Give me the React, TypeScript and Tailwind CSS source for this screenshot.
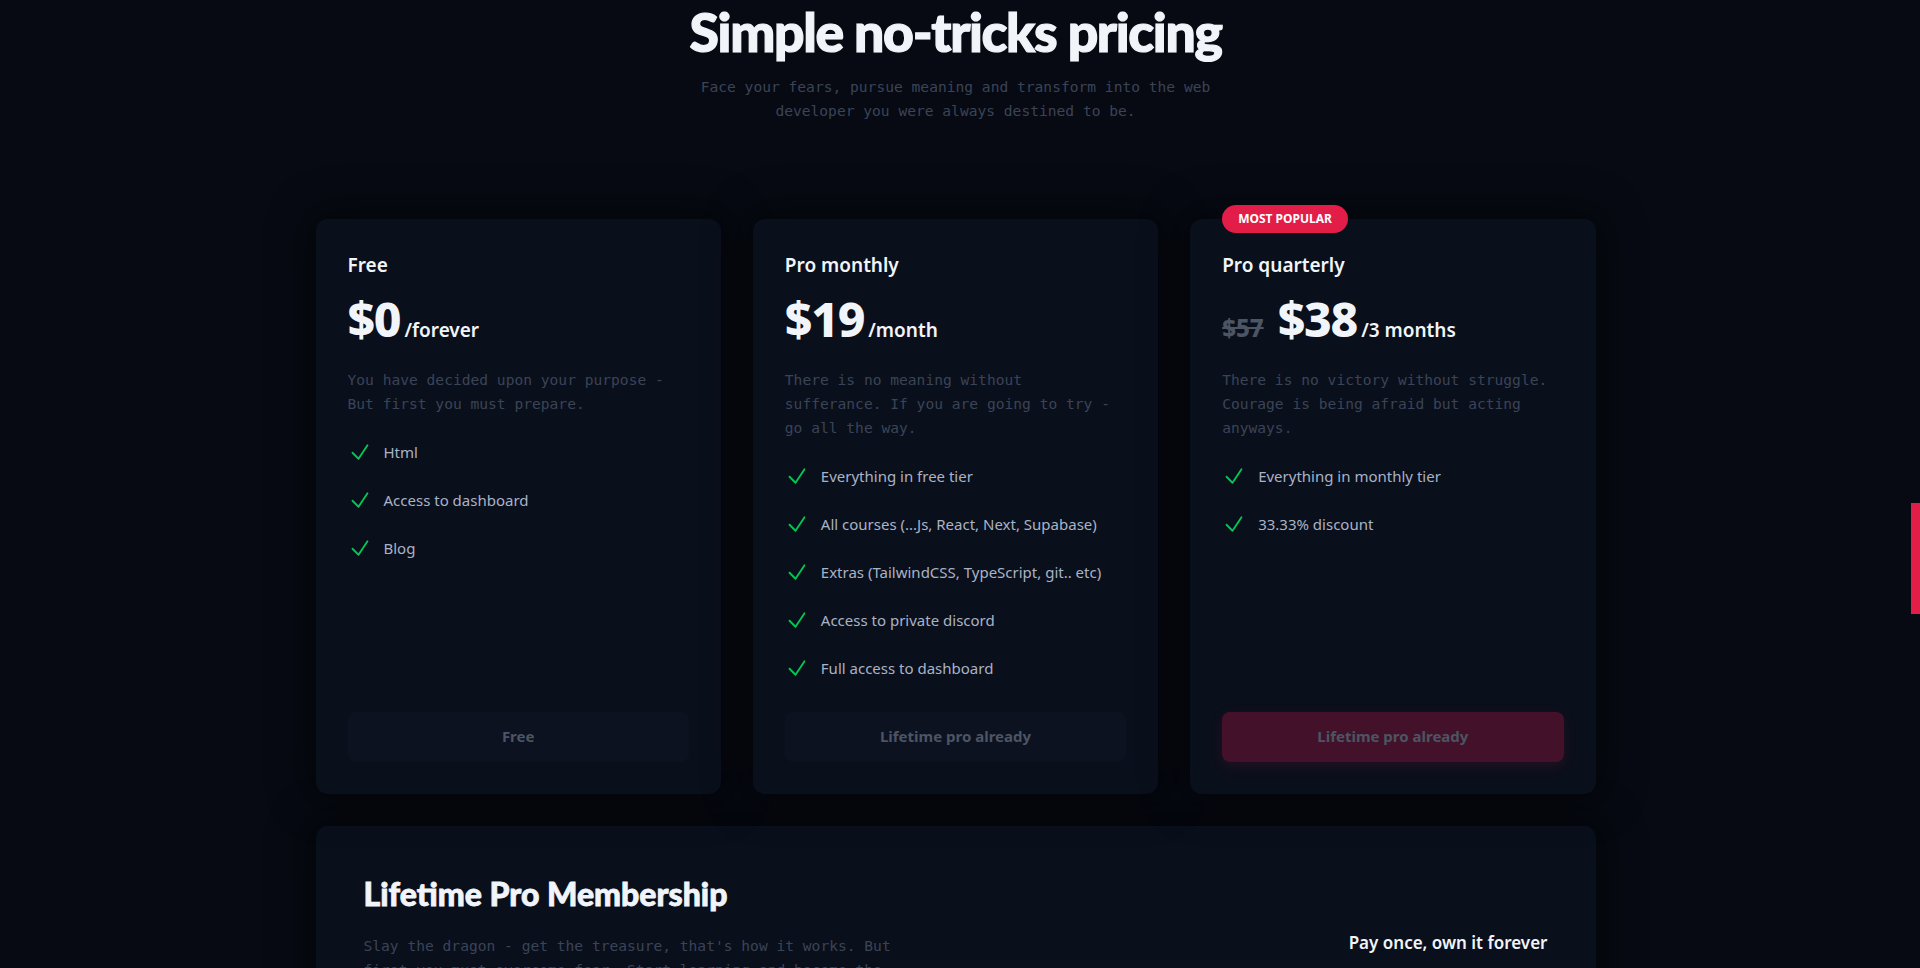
import React from "react";

type Plan = {
  name: string;
  price: string;
  oldPrice?: string;
  period: string;
  text: string;
  features: string[];
  button: string;
  popular?: boolean;
};

const plans: Plan[] = [
  {
    name: "Free",
    price: "$0",
    period: "/forever",
    text: "You have decided upon your purpose - But first you must prepare.",
    features: ["Html", "Access to dashboard", "Blog"],
    button: "Free",
  },
  {
    name: "Pro monthly",
    price: "$19",
    period: "/month",
    text: "There is no meaning without sufferance. If you are going to try - go all the way.",
    features: [
      "Everything in free tier",
      "All courses (...Js, React, Next, Supabase)",
      "Extras (TailwindCSS, TypeScript, git.. etc)",
      "Access to private discord",
      "Full access to dashboard",
    ],
    button: "Lifetime pro already",
  },
  {
    name: "Pro quarterly",
    price: "$38",
    oldPrice: "$57",
    period: "/3 months",
    text: "There is no victory without struggle. Courage is being afraid but acting anyways.",
    features: ["Everything in monthly tier", "33.33% discount"],
    button: "Lifetime pro already",
    popular: true,
  },
];

const sans = "font-['Noto_Sans',sans-serif]";
const heavy = "font-['Lato',sans-serif] font-black";
const mono = "font-['DejaVu_Sans_Mono',monospace] text-[14.6px] leading-6 text-[#3a4457]";

const Check = () => (
  <svg viewBox="0 0 24 24" fill="none" stroke="currentColor" strokeWidth={1.8} className="h-6 w-6 flex-none text-green-500">
    <path strokeLinecap="round" strokeLinejoin="round" d="M4.5 12.75l6 6 9-13.5" />
  </svg>
);

const PlanCard: React.FC<{ plan: Plan }> = ({ plan }) => {
  return (
    <div className="relative flex flex-col rounded-xl bg-[#0a0f1c] p-8 shadow-[0_0_40px_10px_rgba(0,0,0,0.45)]">
      {plan.popular && (
        <span className="absolute -top-3.5 left-8 rounded-full bg-[#e11d48] px-4 py-1.5 text-xs leading-4 font-bold uppercase text-white">
          Most popular
        </span>
      )}
      <h3 className="text-[19px] leading-7 font-semibold text-[#f1f5f9]">{plan.name}</h3>
      <div className="mt-4 flex items-baseline">
        {plan.oldPrice && (
          <span className="mr-3.5 text-2xl font-extrabold text-[#4b5563] line-through">{plan.oldPrice}</span>
        )}
        <span className="text-5xl leading-none font-extrabold tracking-tight text-[#f1f5f9]">{plan.price}</span>
        <span className="ml-1 text-[19px] leading-7 font-semibold text-[#f1f5f9]">{plan.period}</span>
      </div>
      <p className={`mt-6 ${mono}`}>{plan.text}</p>
      <ul className="mt-6 space-y-6">
        {plan.features.map((f) => (
          <li key={f} className="flex items-center gap-3 text-[15px] leading-6 text-[#a9b3c6]">
            <Check />
            <span>{f}</span>
          </li>
        ))}
      </ul>
      <div className="mt-auto pt-8">
        <button
          className={
            plan.popular
              ? "h-[50px] w-full rounded-lg bg-[#43122a] text-[15px] font-bold text-[#4b5563] shadow-[0_4px_14px_rgba(225,29,72,0.12)]"
              : "h-[50px] w-full rounded-lg bg-[#0d1221] text-[15px] font-bold text-[#4b5563]"
          }
        >
          {plan.button}
        </button>
      </div>
    </div>
  );
};

export default function App() {
  return (
    <div className={`flex h-[968px] overflow-hidden bg-[#070a13] ${sans}`}>
      <main className="flex-1 px-8">
        <div className="mx-auto max-w-7xl">
          <header className="flex flex-col items-center pt-[5px] text-center">
            <h1
              className={`text-[53.5px] leading-none tracking-tight text-[#f1f5f9] [-webkit-text-stroke:1.2px_#f1f5f9] ${heavy}`}
            >
              Simple no-tricks pricing
            </h1>
            <p className={`mt-4 max-w-xl ${mono}`}>
              Face your fears, pursue meaning and transform into the web developer you were always destined to be.
            </p>
          </header>

          <div className="mt-24 grid grid-cols-3 gap-8">
            {plans.map((p) => (
              <PlanCard key={p.name} plan={p} />
            ))}
          </div>

          <section className="mt-8 flex justify-between rounded-xl bg-[#0a0f1c] px-12 pt-12 pb-12 shadow-[0_0_40px_10px_rgba(0,0,0,0.45)]">
            <div className="max-w-[540px]">
              <h2 className={`text-[32px] leading-10 text-[#f1f5f9] [-webkit-text-stroke:0.8px_#f1f5f9] ${heavy}`}>
                Lifetime Pro Membership
              </h2>
              <p className={`mt-5 ${mono}`}>
                Slay the dragon - get the treasure, that's how it works. But first you must overcome fear. Start learning
                and become the hero you were meant to be.
              </p>
            </div>
            <div className="flex flex-col items-center pt-[55px]">
              <p className="text-[17px] leading-7 font-semibold text-[#f1f5f9]">Pay once, own it forever</p>
            </div>
          </section>
        </div>
      </main>
      <aside className="w-[9px] flex-none pt-[503px]">
        <div className="h-[111px] bg-[#e11d48]" />
      </aside>
    </div>
  );
}
